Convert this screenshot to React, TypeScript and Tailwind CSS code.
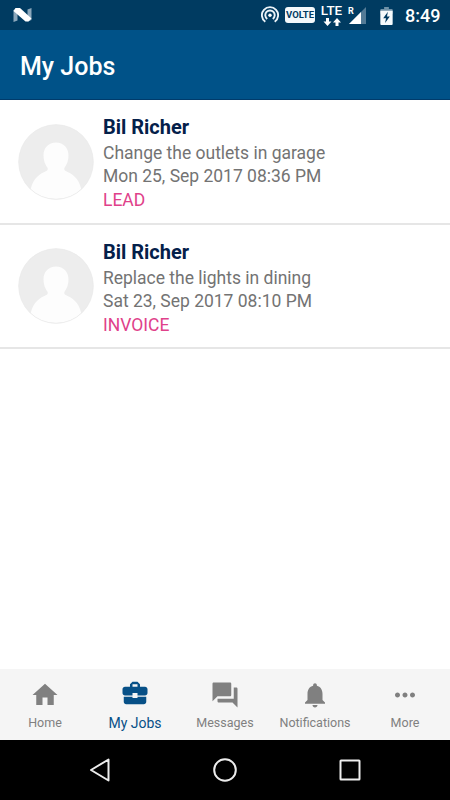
import type { ReactNode } from 'react';

type Job = { name: string; task: string; date: string; status: string };

const jobs: Job[] = [
  { name: 'Bil Richer', task: 'Change the outlets in garage', date: 'Mon 25, Sep 2017 08:36 PM', status: 'LEAD' },
  { name: 'Bil Richer', task: 'Replace the lights in dining', date: 'Sat 23, Sep 2017 08:10 PM', status: 'INVOICE' },
];

function Avatar() {
  return (
    <svg className="block h-[76px] w-[76px] shrink-0" viewBox="0 0 76 76">
      <defs>
        <clipPath id="avatar-clip">
          <circle cx="38" cy="38" r="37" />
        </clipPath>
      </defs>
      <circle cx="38" cy="38" r="37.4" fill="#ededed" />
      <g clipPath="url(#avatar-clip)" fill="#fdfdfd">
        <path d="M38 18.500c-7.600 0-12.500 5.500-12.500 12.800 0 5.500 1.600 9.200 3.800 12.200 1.200 2.500-.2 3.500-2.900 4.500C19 51 13.500 58 12.500 67v10h51V67c-1-9-6.500-16-13.900-19-2.700-1-4.100-2-2.900-4.500 2.200-3 3.800-6.700 3.800-12.200C50.500 24 45.600 18.500 38 18.500z" />
      </g>
      <circle cx="38" cy="38" r="37.3" fill="none" stroke="#e9e9e9" strokeWidth=".7" />
    </svg>
  );
}

function StatusBar() {
  return (
    <div className="flex h-[30px] items-center bg-[#003b61] text-white">
      <svg className="ml-[13px] h-4 w-[19px]" viewBox="0 0 19 16">
        <path d="M.5 3l4-1v11.500l-4 1.500zM18.500 1v12l-4 1.500V2.500z" fill="#8ba7bb" />
        <path d="M2.500 1h4.500L18.500 11.500 15.500 14.500h-3L.5 4z" fill="#fff" />
      </svg>
      <svg className="ml-[229px] h-[18px] w-[18px]" viewBox="0 0 18 18" fill="none" stroke="#eaf3f8" strokeWidth="1.900">
        <path d="M4.300 15.800a8.100 8.100 0 1 1 9.400 0M6.200 12.900a4.700 4.700 0 1 1 5.600 0" />
        <circle cx="9" cy="9.200" r="1.700" fill="#fff" stroke="none" />
      </svg>
      <span className="ml-[6px] flex h-[16px] w-[30px] items-center justify-center rounded-[3px] bg-[#f3f8fb] text-[9.500px] font-bold leading-none text-[#003b61]">VOLTE</span>
      <div className="ml-[5px] flex h-[22px] w-[23px] flex-col items-center">
        <span className="text-[13.500px] font-medium leading-[13px]">LTE</span>
        <svg className="mt-px h-2 w-[18px]" viewBox="0 0 18 8" fill="#fff">
          <path d="M3 0h3v3.500h2.500L4.500 8 .5 3.500H3zM12.500 8h3V4.500H18L14 0l-4 4.500h2.500z" />
        </svg>
      </div>
      <div className="ml-[5px] flex h-[18px] w-[20px]">
        <span className="w-0 text-[9px] font-bold leading-[11px]">R</span>
        <svg className="h-[18px] w-[20px] shrink-0" viewBox="0 0 20 18">
          <path d="M1 18L18 1v17z" fill="#547b96" />
          <path d="M1 18L13 6V18z" fill="#fff" />
        </svg>
      </div>
      <svg className="ml-[12px] mt-px h-[18px] w-[13px]" viewBox="0 0 13 19">
        <path d="M4 0h5v2h3a1 1 0 0 1 1 1v4H0V3a1 1 0 0 1 1-1h3z" fill="#6f91a7" />
        <path d="M0 4h13v14a1 1 0 0 1-1 1H1a1 1 0 0 1-1-1z" fill="#f5fafc" />
        <path d="M8 5L3 12h3l-1 5 5-7H7z" fill="#003b61" />
      </svg>
      <span className="ml-[12px] pt-[2px] text-[18px] font-medium leading-none">8:49</span>
    </div>
  );
}

function JobRow({ job }: { job: Job }) {
  return (
    <div className="flex h-[124.500px] border-b-2 border-[#e6e6e6] pl-[18px]">
      <div className="pt-[23.500px]"><Avatar /></div>
      <div className="ml-[9px] whitespace-nowrap pt-[15px] text-[17.500px] leading-[24px] tracking-[-0.01px] text-[#737373]">
        <div className="text-[20px] font-bold text-[#04204a]">{job.name}</div>
        <div className="pt-[2px]">{job.task}</div>
        <div className="leading-[23px]">{job.date}</div>
        <div className="text-[#e0418a]">{job.status}</div>
      </div>
    </div>
  );
}

function Tab({ label, active = false, children }: { label: string; active?: boolean; children: ReactNode }) {
  return (
    <div className={`flex w-[90px] flex-col items-center ${active ? 'pt-[9px] text-[#075087]' : 'pt-[11px] text-[#808080]'}`}>
      <svg className="h-[30px] w-[30px]" viewBox="0 0 24 24" fill="currentColor">{children}</svg>
      <span className={active ? 'mt-[6px] text-[14px] leading-[19px]' : 'mt-[4px] text-[12.500px] leading-[18px]'}>{label}</span>
    </div>
  );
}

export default function App() {
  return (
    <div className="flex h-[800px] w-[450px] flex-col overflow-hidden bg-white font-['Roboto',sans-serif]">
      <StatusBar />
      <header className="flex h-[70px] items-center border-b border-[#003b6b] bg-[#005288] pl-5 pt-[4px] text-[25px] font-medium text-white">My Jobs</header>
      <main className="flex-1">
        {jobs.map((job) => <JobRow key={job.status} job={job} />)}
      </main>
      <nav className="flex h-[71px] bg-[#f5f5f5]">
        <Tab label="Home"><path d="M10 20v-6h4v6h5v-8h3L12 3 2 12h3v8z" /></Tab>
        <Tab label="My Jobs" active>
          <path d="M10 16v-1H3.010L3 19c0 1.110.89 2 2 2h14c1.110 0 2-.89 2-2v-4h-7v1h-4zm10-9h-4.010V5l-2-2h-4l-2 2v2H4c-1.100 0-2 .9-2 2v3c0 1.110.89 2 2 2h6v-2h4v2h6c1.100 0 2-.9 2-2V9c0-1.100-.9-2-2-2zm-6 0h-4V5h4v2z" />
        </Tab>
        <Tab label="Messages"><path d="M21 6h-2v9H6v2c0 .55.45 1 1 1h11l4 4V7c0-.55-.45-1-1-1zm-4 6V3c0-.55-.45-1-1-1H3c-.55 0-1 .45-1 1v14l4-4h10c.55 0 1-.45 1-1z" /></Tab>
        <Tab label="Notifications"><path d="M12 22c1.100 0 2-.9 2-2h-4c0 1.100.89 2 2 2zm6-6v-5c0-3.070-1.640-5.640-4.500-6.320V4c0-.83-.67-1.500-1.500-1.500s-1.500.67-1.500 1.500v.68C7.630 5.360 6 7.920 6 11v5l-2 2v1h16v-1l-2-2z" /></Tab>
        <Tab label="More"><path d="M6 10c-1.100 0-2 .9-2 2s.9 2 2 2 2-.9 2-2-.9-2-2-2zm12 0c-1.100 0-2 .9-2 2s.9 2 2 2 2-.9 2-2-.9-2-2-2zm-6 0c-1.100 0-2 .9-2 2s.9 2 2 2 2-.9 2-2-.9-2-2-2z" /></Tab>
      </nav>
      <footer className="flex h-[60px] items-center bg-black">
        <svg className="ml-[88px] h-6 w-6" viewBox="0 0 24 24" fill="none" stroke="#ececec" strokeWidth="2" strokeLinejoin="round"><path d="M20.500 1.500v21L3 12z" /></svg>
        <svg className="ml-[101px] h-6 w-6" viewBox="0 0 24 24" fill="none" stroke="#ececec" strokeWidth="2"><circle cx="12" cy="12" r="10.800" /></svg>
        <svg className="ml-[101px] h-6 w-6" viewBox="0 0 24 24" fill="none" stroke="#ececec" strokeWidth="2" strokeLinejoin="round"><rect x="2.500" y="2.500" width="19" height="19" rx=".5" /></svg>
      </footer>
    </div>
  );
}
